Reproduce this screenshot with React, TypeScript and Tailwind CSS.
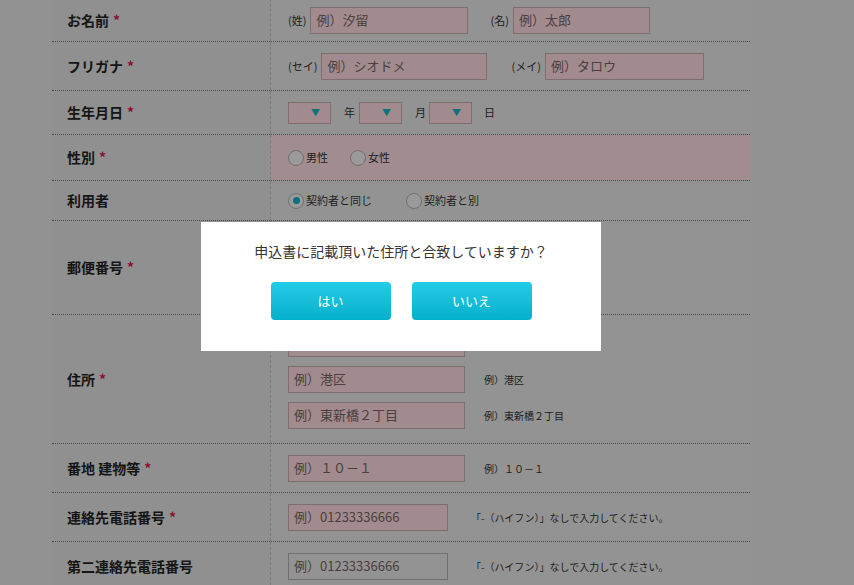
import React from "react";

const F = { fontFamily: '"Noto Sans CJK JP", "Noto Sans", sans-serif' };

const Star = () => <span className="text-[#8a1030] ml-1">*</span>;

const Row = ({ label, req, h, children, pink }: { label: string; req?: boolean; h: number; children?: React.ReactNode; pink?: boolean }) => (
  <div className="flex border-b border-dotted border-[#4a4a4a]" style={{ height: h }}>
    <div className="w-[218px] shrink-0 flex items-center pl-[15px] text-[14px] font-bold text-[#151515] bg-[#909090]">
      {label}
      {req && <Star />}
    </div>
    <div className={`flex-1 border-l border-dashed border-[#7a7a7a] pl-[17px] flex items-center text-[11px] text-[#1e1e1e] ${pink ? "bg-[#a18c8f]" : "bg-[#939393]"}`}>
      {children}
    </div>
  </div>
);

const Input = ({ w, ph, pink = true }: { w: number; ph: string; pink?: boolean }) => (
  <div className={`h-[27px] border flex items-center px-[5px] text-[13px] text-[#4a4040] ${pink ? "bg-[#a18b8e] border-[#7d6e70]" : "bg-[#939393] border-[#6f6f6f]"}`} style={{ width: w }}>
    {ph}
  </div>
);

const Sel = () => (
  <div className="w-[43px] h-[22px] bg-[#a18b8e] border border-[#7d6e70] flex items-center justify-end pr-[10px]">
    <span className="text-[#11707a] text-[9px]">▼</span>
  </div>
);

const Radio = ({ on }: { on?: boolean }) => (
  <span className="w-[16px] h-[16px] rounded-full border border-[#707070] bg-[#9a9a9a] inline-flex items-center justify-center mr-[2px]">
    {on && <span className="w-[7px] h-[7px] rounded-full bg-[#0c6f80]" />}
  </span>
);

export default function App() {
  return (
    <div className="relative w-[854px] h-[585px] overflow-hidden bg-[#929292]" style={F}>
      <div className="ml-[52px] w-[698px] -mt-[1px]">
        <Row label="お名前" req h={43}>
          <span className="mr-[4px]">(姓)</span><Input w={158} ph="例）汐留" />
          <span className="ml-[22px] mr-[4px]">(名)</span><Input w={137} ph="例）太郎" />
        </Row>
        <Row label="フリガナ" req h={49}>
          <span className="mr-[4px]">(セイ)</span><Input w={166} ph="例）シオドメ" />
          <span className="ml-[24px] mr-[4px]">(メイ)</span><Input w={159} ph="例）タロウ" />
        </Row>
        <Row label="生年月日" req h={44}>
          <Sel /><span className="ml-[13px] mr-[4px]">年</span><Sel /><span className="ml-[13px] mr-[3px]">月</span><Sel /><span className="ml-[12px]">日</span>
        </Row>
        <Row label="性別" req h={46} pink>
          <Radio /><span>男性</span><span className="ml-[22px]" /><Radio /><span>女性</span>
        </Row>
        <Row label="利用者" h={40}>
          <Radio on /><span>契約者と同じ</span><span className="ml-[34px]" /><Radio /><span>契約者と別</span>
        </Row>
        <Row label="郵便番号" req h={94} />
        <Row label="住所" req h={129}>
          <div className="flex flex-col gap-[9px]">
            <div className="flex items-center"><Input w={177} ph="" /></div>
            <div className="flex items-center"><Input w={177} ph="例）港区" /><span className="ml-[19px] text-[10px]">例）港区</span></div>
            <div className="flex items-center"><Input w={177} ph="例）東新橋２丁目" /><span className="ml-[19px] text-[10px]">例）東新橋２丁目</span></div>
          </div>
        </Row>
        <Row label="番地 建物等" req h={49}>
          <Input w={177} ph="例）１０－１" /><span className="ml-[19px] text-[10px]">例）１０－１</span>
        </Row>
        <Row label="連絡先電話番号" req h={49}>
          <Input w={160} ph="例）01233336666" /><span className="ml-[23px] text-[10px]">「-（ハイフン）」なしで入力してください。</span>
        </Row>
        <Row label="第二連絡先電話番号" h={49}>
          <Input w={160} ph="例）01233336666" pink={false} /><span className="ml-[23px] text-[10px]">「-（ハイフン）」なしで入力してください。</span>
        </Row>
      </div>

      <div className="absolute left-[201px] top-[222px] w-[400px] h-[129px] bg-white flex flex-col items-center">
        <div className="mt-[19px] text-[14px] text-[#333]">申込書に記載頂いた住所と合致していますか？</div>
        <div className="mt-[20px] flex gap-[21px]">
          <button className="w-[120px] h-[38px] rounded-[4px] bg-gradient-to-b from-[#22cbe8] to-[#03b0cb] text-white text-[13px]">はい</button>
          <button className="w-[120px] h-[38px] rounded-[4px] bg-gradient-to-b from-[#22cbe8] to-[#03b0cb] text-white text-[13px]">いいえ</button>
        </div>
      </div>
    </div>
  );
}
